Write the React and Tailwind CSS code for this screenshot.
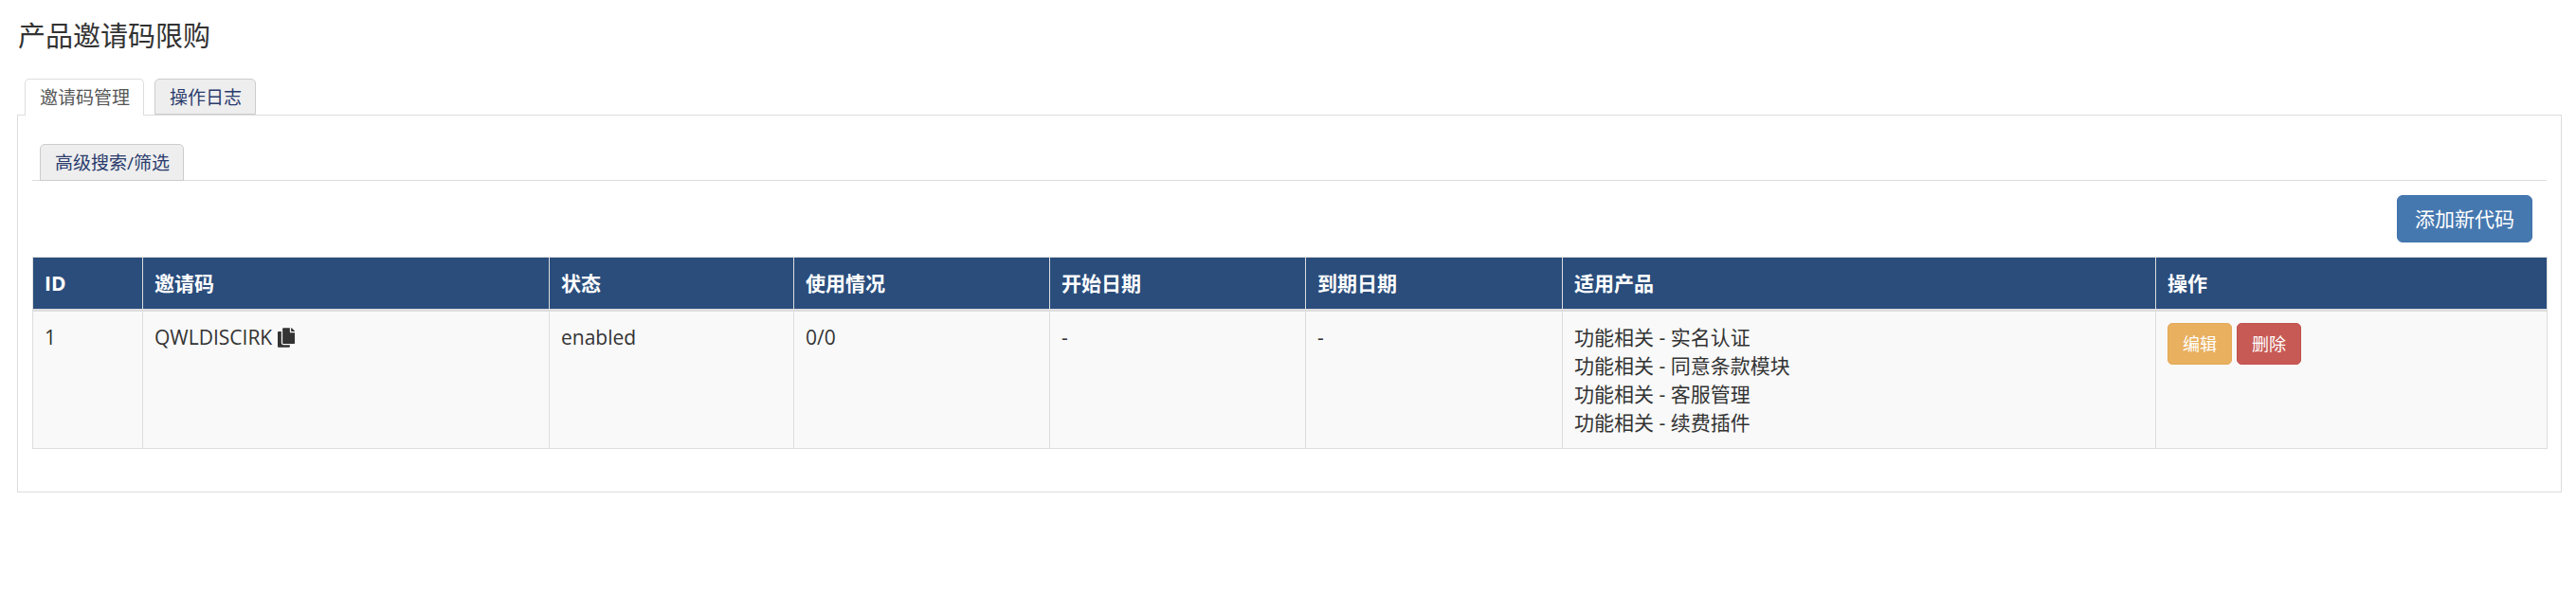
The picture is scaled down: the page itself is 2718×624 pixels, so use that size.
import React from 'react';
import { FaCopy } from 'react-icons/fa';

const columns = [
  { label: 'ID', width: 'w-[116px]' },
  { label: '邀请码', width: 'w-[429px]' },
  { label: '状态', width: 'w-[258px]' },
  { label: '使用情况', width: 'w-[270px]' },
  { label: '开始日期', width: 'w-[270px]' },
  { label: '到期日期', width: 'w-[271px]' },
  { label: '适用产品', width: 'w-[626px]' },
  { label: '操作', width: 'w-[413px]' },
];

const products = ['实名认证', '同意条款模块', '客服管理', '续费插件'];

const cell = 'border border-[#ddd] px-3 py-3 align-top';

const App = () => {
  return (
    <div className="h-[624px] bg-white pt-[18px] pr-[15px] pl-[18px] font-['Open_Sans','Noto_Sans_CJK_SC',sans-serif] text-[21px] leading-[30px] text-[#333]">
      <h1 className="pl-px text-[29px] leading-10 font-normal">产品邀请码限购</h1>

      {/* Top tabs */}
      <div className="relative z-10 mt-[25px] -mb-px flex gap-[11px] pl-2 text-[19px] leading-[26px] whitespace-nowrap">
        <div className="h-[39px] w-[126px] rounded-t-[5px] border border-b-0 border-[#ddd] bg-white px-[15px] py-[6px] text-[#555]">邀请码管理</div>
        <div className="h-[38px] w-[107px] rounded-t-[5px] border border-[#ccc] bg-[#eee] px-[15px] py-[6px] text-[#2a3b6d]">操作日志</div>
      </div>

      <div className="h-[399px] border border-[#ddd] px-[15px] pt-[30px]">
        {/* Sub tab */}
        <div className="flex border-b border-[#ddd] pl-2 text-[19px] leading-[26px]">
          <div className="-mb-px h-[39px] w-[152px] rounded-t-[5px] border border-[#ccc] bg-[#eee] px-[15px] py-[6px] whitespace-nowrap text-[#2a3b6d]">高级搜索/筛选</div>
        </div>

        <div className="mt-[15px] flex justify-end pr-[15px]">
          <button className="h-[50px] w-[143px] rounded-[6px] border border-[#3f72ab] bg-[#4678b0] text-[21px] text-white">添加新代码</button>
        </div>

        <table className="mt-[15px] w-full table-fixed border-collapse">
          <thead>
            <tr className="h-[56px] bg-[#2a4d7c] text-white">
              {columns.map((col) => (
                <th key={col.label} className={`${col.width} border border-[#ddd] border-b-[3px] px-3 text-left align-middle font-bold`}>
                  {col.label}
                </th>
              ))}
            </tr>
          </thead>
          <tbody>
            <tr className="bg-[#f9f9f9]">
              <td className={cell}>1</td>
              <td className={cell}>
                <span className="inline-flex items-center gap-[6px]">
                  QWLDISCIRK
                  <FaCopy className="h-[21px] w-[18px] text-[#333]" />
                </span>
              </td>
              <td className={cell}>enabled</td>
              <td className={cell}>0/0</td>
              <td className={cell}>-</td>
              <td className={cell}>-</td>
              <td className={cell}>
                {products.map((name) => (
                  <div key={name}>功能相关 - {name}</div>
                ))}
              </td>
              <td className={cell}>
                <div className="flex gap-[5px]">
                  <button className="h-[44px] w-[68px] rounded-[5px] border border-[#e5a95a] bg-[#e8b05f] text-[18px] text-white">编辑</button>
                  <button className="h-[44px] w-[68px] rounded-[5px] border border-[#c2524d] bg-[#c85a55] text-[18px] text-white">删除</button>
                </div>
              </td>
            </tr>
          </tbody>
        </table>
      </div>
    </div>
  );
};

export default App;
